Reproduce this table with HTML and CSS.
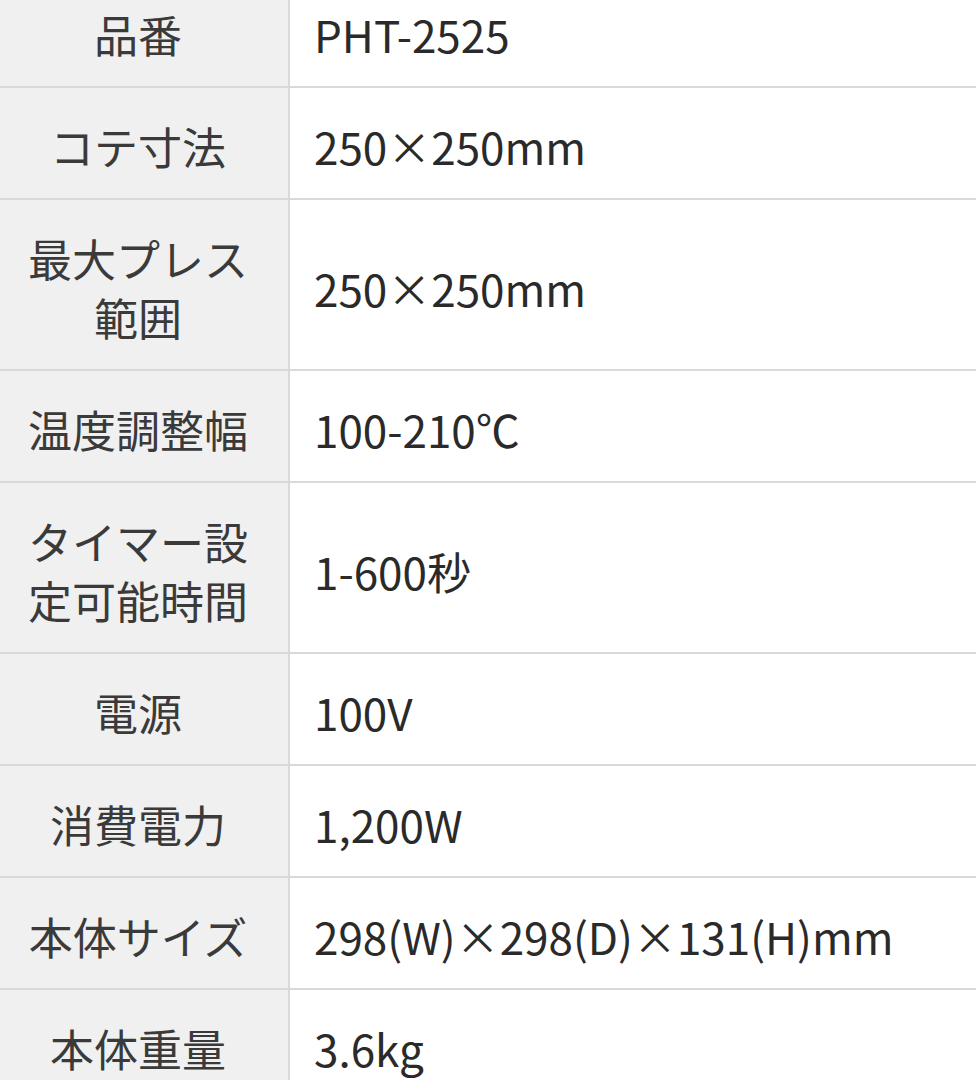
FILE: index.html
```html
<!DOCTYPE html>
<html lang="ja">
<head>
<meta charset="utf-8">
<link rel="stylesheet" href="styles.css">
</head>
<body>
<table class="spec">
  <tbody>
    <tr><th>品番</th><td>PHT-2525</td></tr>
    <tr><th>コテ寸法</th><td>250×250mm</td></tr>
    <tr><th>最大プレス<br>範囲</th><td>250×250mm</td></tr>
    <tr><th>温度調整幅</th><td>100-210℃</td></tr>
    <tr><th>タイマー設<br>定可能時間</th><td>1-600秒</td></tr>
    <tr><th>電源</th><td>100V</td></tr>
    <tr><th>消費電力</th><td>1,200W</td></tr>
    <tr><th>本体サイズ</th><td>298(W)×298(D)×131(H)mm</td></tr>
    <tr><th>本体重量</th><td>3.6kg</td></tr>
  </tbody>
</table>
</body>
</html>
```
FILE: styles.css
```css
html, body {
  margin: 0;
  padding: 0;
  background: #ffffff;
  overflow: hidden;
}
.spec {
  border-collapse: collapse;
  margin-top: -24px;
  margin-left: -12px;
  width: 1000px;
  font-family: "Noto Sans CJK JP", "Noto Sans", sans-serif;
  font-size: 44px;
  line-height: 59px;
  color: #333333;
}
.spec th, .spec td {
  border-bottom: 2px solid #d9d9d9;
  padding: 29px 0 22px;
  vertical-align: middle;
}
.spec th {
  width: 300px;
  background: #f0f0f0;
  font-weight: normal;
  text-align: center;
  border-right: 2px solid #d9d9d9;
  color: #3a3a3a;
}
.spec td {
  text-align: left;
  padding-left: 24px;
  color: #2a2a2a;
}
```
